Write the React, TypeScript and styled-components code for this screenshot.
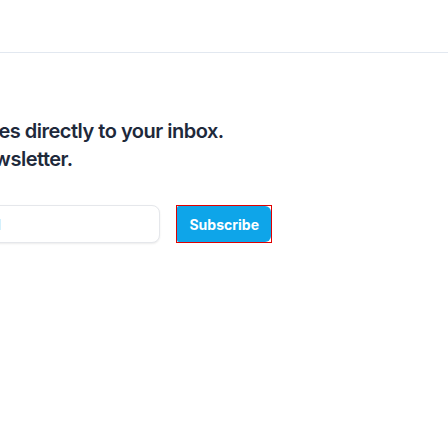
import React from "react";
import styled, { createGlobalStyle } from "styled-components";

const GlobalStyle = createGlobalStyle`
  html, body {
    margin: 0;
    padding: 0;
    background: #ffffff;
    overflow: hidden;
  }
  body {
    font-family: Inter, "Noto Sans", "Liberation Sans", sans-serif;
  }
  * { box-sizing: border-box; }
`;

const Page = styled.div`
  width: 448px;
  height: 448px;
  display: flex;
  flex-direction: column;
  background: #ffffff;
`;

const Header = styled.header`
  height: 53px;
  flex-shrink: 0;
  border-bottom: 1px solid #e2e8f0;
`;

const Section = styled.section`
  padding-top: 64px;
  display: flex;
`;

const Content = styled.div`
  margin-left: -128px;
  width: 400px;
  flex-shrink: 0;
  display: flex;
  flex-direction: column;
  gap: 32px;
`;

const Heading = styled.h2`
  margin: 0;
  font-size: 20px;
  line-height: 28px;
  font-weight: 600;
  letter-spacing: -0.5px;
  color: #1e293b;
  white-space: nowrap;
`;

const Line = styled.span`
  display: block;
`;

const Form = styled.form`
  display: flex;
  gap: 16px;
  align-items: stretch;
`;

const EmailInput = styled.input`
  flex: 1;
  min-width: 0;
  height: 38px;
  padding: 0 16px 0 21px;
  border: 1px solid #e5e7eb;
  border-radius: 8px;
  box-shadow: 0 1px 2px rgba(0, 0, 0, 0.08);
  font-family: Inter, "Noto Sans", sans-serif;
  font-size: 14px;
  color: #1e293b;
  outline: none;
  &::placeholder {
    color: #94a3b8;
  }
`;

const ButtonFrame = styled.div`
  border: 1px solid #e00000;
  display: flex;
`;

const SubscribeButton = styled.button`
  height: 36px;
  padding: 0 12px;
  border: none;
  border-radius: 2px 6px 6px 2px;
  background: #0ea5e9;
  color: #ffffff;
  font-family: Inter, "Noto Sans", sans-serif;
  font-size: 14px;
  font-weight: 700;
  cursor: pointer;
`;

export default function App() {
  return (
    <>
      <GlobalStyle />
      <Page>
        <Header />
        <Section>
          <Content>
            <Heading>
              <Line>Get new articles directly to your inbox.</Line>
              <Line>Follow our newsletter.</Line>
            </Heading>
            <Form onSubmit={(e) => e.preventDefault()}>
              <EmailInput type="email" placeholder="Enter your email" />
              <ButtonFrame>
                <SubscribeButton type="submit">Subscribe</SubscribeButton>
              </ButtonFrame>
            </Form>
          </Content>
        </Section>
      </Page>
    </>
  );
}
